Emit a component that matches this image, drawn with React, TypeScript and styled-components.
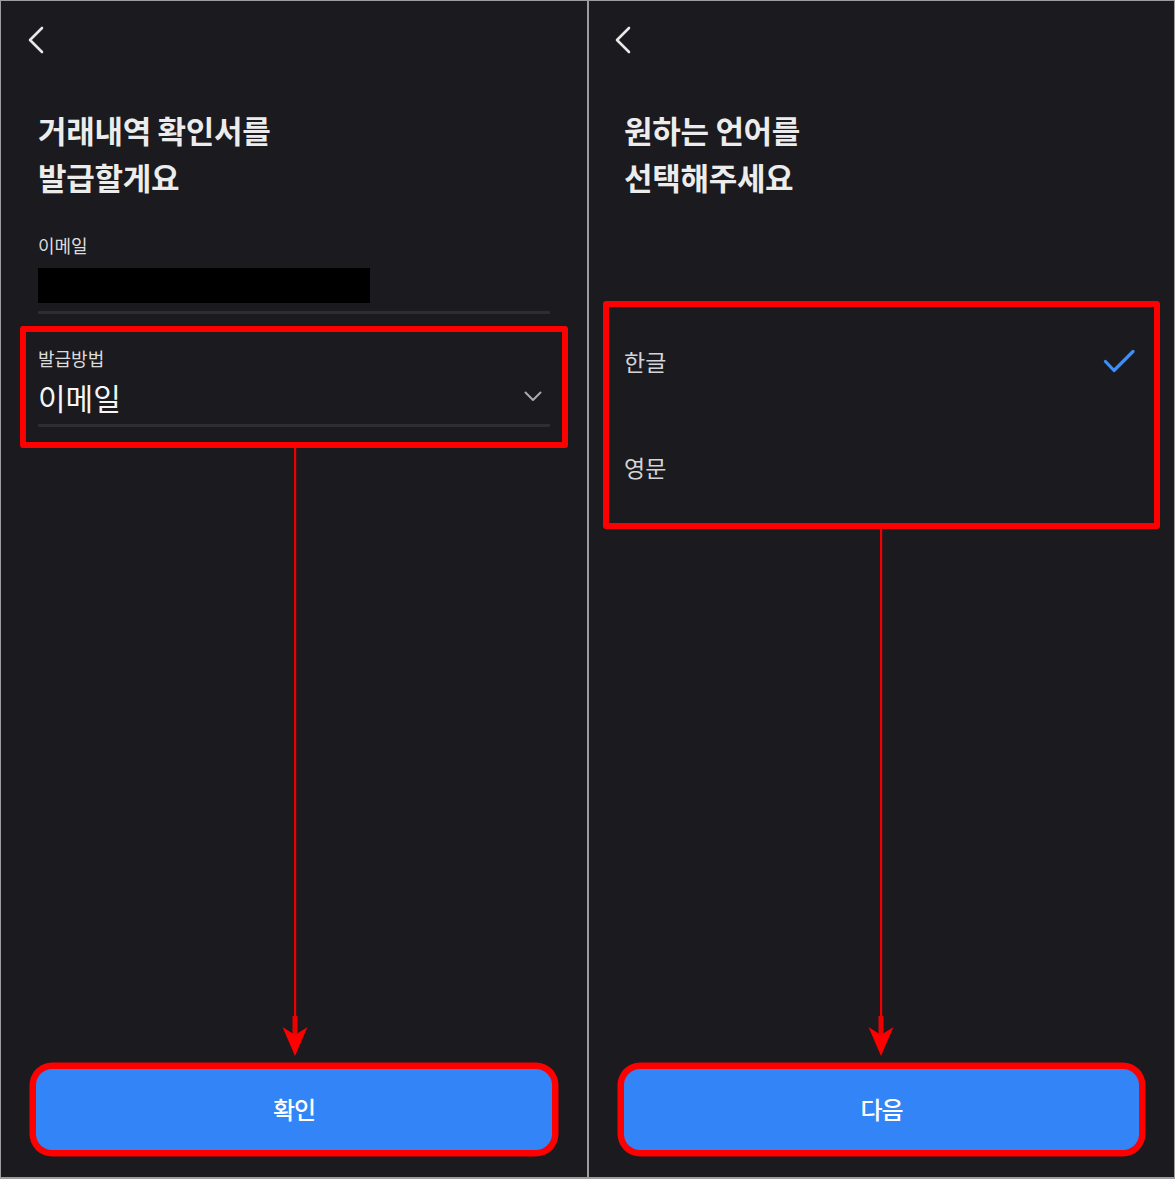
import React from "react";
import styled, { createGlobalStyle } from "styled-components";

const GlobalStyle = createGlobalStyle`
  html, body { margin: 0; padding: 0; background: #9d9d9d; }
  body { font-family: "Noto Sans CJK KR", "Noto Sans", sans-serif; }
  * { box-sizing: border-box; }
`;

const Frame = styled.div`
  display: flex;
  gap: 2px;
  width: 1175px;
  height: 1179px;
  padding: 1px 1px 2px 1px;
  background: #9d9d9d;
`;

const Panel = styled.section<{ $w: number }>`
  position: relative;
  display: flex;
  flex-direction: column;
  width: ${(p) => p.$w}px;
  height: 1176px;
  background: #1a1a1f;
  overflow: hidden;
`;

const Header = styled.header<{ $inset: number }>`
  display: flex;
  align-items: center;
  height: 78px;
  padding-left: ${(p) => p.$inset}px;
`;

const BackButton = styled.button`
  display: flex;
  padding: 0;
  border: 0;
  background: none;
  color: #e8e8e8;
  cursor: pointer;
`;

const Body = styled.div<{ $inset: number }>`
  display: flex;
  flex-direction: column;
  padding: 0 ${(p) => p.$inset}px;
`;

const Title = styled.h1`
  margin: 27px 0 0;
  font-size: 31px;
  line-height: 47px;
  font-weight: 700;
  letter-spacing: -0.3px;
  color: #ececec;
`;

const Form = styled.div`
  display: flex;
  flex-direction: column;
  margin-top: 35px;
`;

const Field = styled.div`
  display: flex;
  flex-direction: column;
`;

const FieldLabel = styled.div`
  height: 20px;
  font-size: 18px;
  line-height: 20px;
  letter-spacing: 0;
  color: #dcdcdc;
`;

const FieldValue = styled.div`
  display: flex;
  align-items: center;
  justify-content: space-between;
  height: 40px;
  margin-top: 10px;
  padding-bottom: 3px;
  font-size: 30px;
  letter-spacing: 0;
  color: #f5f5f5;
`;

const Masked = styled.div`
  width: 332px;
  height: 35px;
  margin-top: 3px;
  background: #000;
`;

const Underline = styled.div`
  height: 3px;
  margin-top: 6px;
  background: #2d2e35;
  border-radius: 1px;
`;

const Chevron = styled.span`
  display: flex;
  margin-right: 8px;
  color: #a9abb3;
`;

const Highlight = styled.div<{ $mx: number; $pad: string; $mt: number }>`
  margin: ${(p) => p.$mt}px -${(p) => p.$mx}px 0;
  padding: ${(p) => p.$pad};
  border: 6px solid #ff0000;
  border-radius: 3px;
`;

const OptionList = styled.ul`
  list-style: none;
  margin: 0;
  padding: 0;
`;

const OptionRow = styled.li`
  display: flex;
  align-items: center;
  justify-content: space-between;
  height: 106px;
  padding: 0 19px 0 15px;
  font-size: 23px;
  letter-spacing: 0;
  color: #d4d4d8;
`;

const Spacer = styled.div`
  flex: 1;
`;

const Footer = styled.footer`
  display: flex;
  padding: 0 35px 27px;
`;

const PrimaryButton = styled.button`
  flex: 1;
  height: 81px;
  padding: 0 0 3px;
  border: 0;
  border-radius: 16px;
  background: #3384f6;
  color: #ffffff;
  font-family: "Noto Sans CJK KR", "Noto Sans", sans-serif;
  font-size: 24px;
  font-weight: 500;
  letter-spacing: -1px;
  box-shadow: 0 0 0 6.5px #ff0000;
  cursor: pointer;
`;

const Arrow = styled.div<{ $left: number; $top: number; $h: number }>`
  position: absolute;
  left: ${(p) => p.$left - 13}px;
  top: ${(p) => p.$top}px;
  width: 26px;
  height: ${(p) => p.$h}px;
  pointer-events: none;
`;

const BackIcon = () => (
  <svg width="18" height="28" viewBox="0 0 18 28" fill="none">
    <path d="M15 2 L3 14 L15 26" stroke="currentColor" strokeWidth="2.6" strokeLinecap="round" strokeLinejoin="round" />
  </svg>
);

const DownIcon = () => (
  <svg width="18" height="11" viewBox="0 0 18 11" fill="none">
    <path d="M1.5 1.5 L9 9 L16.5 1.5" stroke="currentColor" strokeWidth="2" strokeLinecap="round" strokeLinejoin="round" />
  </svg>
);

const CheckIcon = () => (
  <svg width="32" height="24" viewBox="0 0 32 24" fill="none">
    <path d="M2.5 12.5 L11 21.5 L30 2.5" stroke="#3f8ef5" strokeWidth="3.2" strokeLinecap="round" strokeLinejoin="round" />
  </svg>
);

const AnnotationArrow = ({ left, top, height }: { left: number; top: number; height: number }) => (
  <Arrow $left={left} $top={top} $h={height}>
    <svg width="26" height={height} viewBox={`0 0 26 ${height}`}>
      <rect x="12" y="0" width="2.2" height={height - 20} fill="#ee0000" />
      <rect x="10.5" y={height - 40} width="5" height="18" fill="#ee0000" />
      <polygon points={`0.5,${height - 29} 13,${height - 21} 25.5,${height - 29} 13,${height}`} fill="#ff0000" />
    </svg>
  </Arrow>
);

const IssuePanel = () => (
  <Panel $w={586}>
    <Header $inset={26}>
      <BackButton aria-label="뒤로">
        <BackIcon />
      </BackButton>
    </Header>
    <Body $inset={37}>
      <Title>
        거래내역 확인서를
        <br />
        발급할게요
      </Title>
      <Form>
        <Field>
          <FieldLabel>이메일</FieldLabel>
          <FieldValue>
            <Masked />
          </FieldValue>
          <Underline />
        </Field>
        <Highlight $mx={18} $mt={12} $pad="16px 12px 15px">
          <Field>
            <FieldLabel>발급방법</FieldLabel>
            <FieldValue>
              <span>이메일</span>
              <Chevron>
                <DownIcon />
              </Chevron>
            </FieldValue>
            <Underline />
          </Field>
        </Highlight>
      </Form>
    </Body>
    <Spacer />
    <Footer>
      <PrimaryButton>확인</PrimaryButton>
    </Footer>
    <AnnotationArrow left={293.5} top={447} height={608} />
  </Panel>
);

const LanguagePanel = () => (
  <Panel $w={585}>
    <Header $inset={25}>
      <BackButton aria-label="뒤로">
        <BackIcon />
      </BackButton>
    </Header>
    <Body $inset={35}>
      <Title>
        원하는 언어를
        <br />
        선택해주세요
      </Title>
      <Highlight $mx={21} $mt={101} $pad="1px 0 3px">
        <OptionList>
          <OptionRow>
            <span>한글</span>
            <CheckIcon />
          </OptionRow>
          <OptionRow>
            <span>영문</span>
          </OptionRow>
        </OptionList>
      </Highlight>
    </Body>
    <Spacer />
    <Footer>
      <PrimaryButton>다음</PrimaryButton>
    </Footer>
    <AnnotationArrow left={291.5} top={527} height={528} />
  </Panel>
);

export default function App() {
  return (
    <>
      <GlobalStyle />
      <Frame>
        <IssuePanel />
        <LanguagePanel />
      </Frame>
    </>
  );
}
